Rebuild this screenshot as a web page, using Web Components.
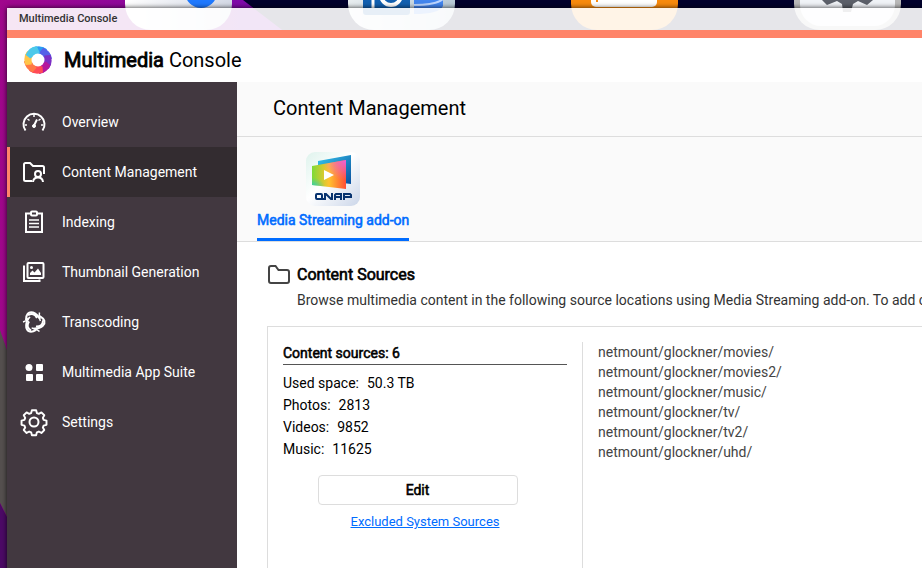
<!DOCTYPE html>
<html lang="en">
<head>
<meta charset="utf-8">
<title>Multimedia Console</title>
<style>
    html, body {
        height: 100%;
        margin: 0;
    }
    body {
        overflow: hidden;
        font-family: Roboto, "Liberation Sans", sans-serif;
        font-size: 14px;
        line-height: 20px;
        color: #000;
    }
    b {
        font-weight: 400;
        -webkit-text-stroke: .04em;
    }
</style>
</head>
<body>
<qc-desktop>
    <qc-window caption="Multimedia Console">
        <qc-brand slot="header"><b>Multimedia</b> Console</qc-brand>
        <qc-sidebar slot="sidebar">
            <qc-nav-item icon="gauge">Overview</qc-nav-item>
            <qc-nav-item icon="content" selected>Content Management</qc-nav-item>
            <qc-nav-item icon="clipboard">Indexing</qc-nav-item>
            <qc-nav-item icon="images">Thumbnail Generation</qc-nav-item>
            <qc-nav-item icon="transcode">Transcoding</qc-nav-item>
            <qc-nav-item icon="apps">Multimedia App Suite</qc-nav-item>
            <qc-nav-item icon="gear">Settings</qc-nav-item>
        </qc-sidebar>
        <qc-page-head heading="Content Management">
            <qc-app-tab>Media Streaming add-on</qc-app-tab>
        </qc-page-head>
        <qc-section heading="Content Sources">
            <span slot="description">Browse multimedia content in the following source locations using Media Streaming add-on. To add content sources, click Edit.</span>
            <qc-sources>
                <qc-stat label="Used space:" slot="stats">50.3 TB</qc-stat>
                <qc-stat label="Photos:" slot="stats">2813</qc-stat>
                <qc-stat label="Videos:" slot="stats">9852</qc-stat>
                <qc-stat label="Music:" slot="stats">11625</qc-stat>
                <qc-path>netmount/glockner/movies/</qc-path>
                <qc-path>netmount/glockner/movies2/</qc-path>
                <qc-path>netmount/glockner/music/</qc-path>
                <qc-path>netmount/glockner/tv/</qc-path>
                <qc-path>netmount/glockner/tv2/</qc-path>
                <qc-path>netmount/glockner/uhd/</qc-path>
            </qc-sources>
        </qc-section>
    </qc-window>
</qc-desktop>

<script>
// One arm of the transcoding knot, drawn three times round the centre
const KNOT_ARM = `
    <path d="M4 10Q4 1 11 2.500Q15 4 18 9" stroke-width="2"/>
    <path d="M6 5Q12 2 15 8" stroke-width="2"/>
    <path d="M1 12Q5 11 8 7" stroke-width="1.500"/>`;

const ICONS = {
    gauge: `
        <path d="M3.500 20.500A10.500 10.500 0 1 1 20.500 20.500" stroke-width="2"/>
        <path d="M12 4v3M5.500 9l2 1.500M18.500 9l-2 1.500M3 15h2M19 15h2" stroke-width="1.500"/>
        <path d="M15 9.500l-3 6" stroke-width="2"/><circle cx="12" cy="16" r="1.500" fill="currentColor"/>`,
    content: `
        <path d="M10 21H3.500Q2 21 2 19.500V4.500Q2 3 3.500 3H8l3 3h9.500Q22 6 22 7.500V14" stroke-width="2"/>
        <circle cx="16" cy="14" r="3" stroke-width="2"/>
        <path d="M11 22q.5-4.500 5-4.500t5 4.500" stroke-width="2"/>`,
    clipboard: `
        <path d="M9 3.500H4V22h16V3.500h-5" stroke-width="2"/>
        <rect x="9" y="1.500" width="6" height="4" rx="1" stroke-width="2"/>
        <path d="M7 10h10M7 13.500h10M7 17h10" stroke-width="1.500"/>`,
    images: `
        <rect x="5.500" y="3" width="16" height="15" rx="1" stroke-width="2"/>
        <path d="M3 6.500H2V21h15.500v-1.500" stroke-width="2"/>
        <circle cx="9.500" cy="7.500" r="1.500" fill="currentColor" stroke="none"/>
        <path d="M8 15v-2l2.500-2.500 2 2L16 8.500l3 4.500v2z" fill="currentColor" stroke="none"/>`,
    transcode: [0, 120, 240].map(angle => `<g transform="rotate(${angle} 12 12)">${KNOT_ARM}</g>`).join(''),
    apps: `
        <g fill="currentColor" stroke="none"><circle cx="7" cy="7.500" r="3.500"/>
        <rect x="14" y="4" width="7" height="7" rx="1"/>
        <rect x="4" y="14" width="7" height="7" rx="1"/>
        <rect x="14" y="14" width="7" height="7" rx="1"/></g>`,
    gear: `
        <circle cx="12" cy="12" r="4.500" stroke-width="2"/>
        <path d="M9.800 -.3h4.400l.8 3 2 .8 2.700-1.500 3 3-1.500 2.700.8 2 3 .8v4.400l-3 .8-.8 2 1.500 2.700-3 3-2.700-1.500-2 .8-.8 3H9.800l-.8-3-2-.8-2.700 1.500-3-3 1.500-2.700-.8-2-3-.8v-4.400l3-.8.8-2-1.500-2.700 3-3 2.700 1.500 2-.8z" transform="translate(.5 .5) scale(.96)" stroke-width="2" stroke-linejoin="round"/>`,
};

class QcElement extends HTMLElement {

    constructor() {
        super();
        this.attachShadow({ mode: 'open' });
    }

    connectedCallback() {
        const template = document.createElement('template');
        template.innerHTML = `<style>* { box-sizing: border-box; }</style>` + this.render();
        this.shadowRoot.replaceChildren(template.content.cloneNode(true));
    }
}

// Wallpaper and shortcuts, with the open window above them
class QcDesktop extends QcElement {
    render() {
        return `
            <style>
                :host {
                    display: flex;
                    position: relative;
                    height: 100vh;
                    padding: 8px 0 0 7px;
                    overflow: hidden;
                    background: #01002c;
                }
                svg {
                    position: absolute;
                    top: 0;
                    left: 0;
                }
                ::slotted(*) {
                    position: relative;
                    flex: 1;
                    min-width: 0;
                }
            </style>
            <svg width="922" height="568" aria-hidden="true">
                <defs>
                    <linearGradient id="sky"><stop offset="0" stop-color="#a0078c"/><stop offset="1" stop-color="#7809ae"/></linearGradient>
                    <linearGradient id="tile"><stop offset="0" stop-color="#fff"/><stop offset="1" stop-color="#d4d9e6"/></linearGradient>
                    <linearGradient id="mail"><stop offset="0" stop-color="#e9eef0"/><stop offset="1" stop-color="#b7c9d6"/></linearGradient>
                </defs>
                <path d="M0 0H243L290 36H60V568H0z" fill="url(#sky)"/>
                <path d="M0 330L14 370V530L0 503z" fill="#55504f"/>
                <path d="M0 503L30 563V568H0z" fill="#4c0a66"/>
                <rect x="125" y="-77" width="107" height="107" rx="26" fill="url(#tile)"/>
                <circle cx="201" cy="-8" r="16" fill="#1f79ff"/>
                <rect x="348" y="-77" width="107" height="107" rx="26" fill="url(#mail)"/>
                <rect x="363" y="-30" width="47" height="45" rx="3" fill="#1260b0"/>
                <path d="M373 0v8" stroke="#fff" stroke-width="3"/>
                <circle cx="391" cy="-5" r="10" fill="none" stroke="#fff" stroke-width="4"/>
                <path d="M414-10h29V6q-4 8-29 8z" fill="#4285ee"/>
                <path d="M414 5q22 0 29-6" fill="none" stroke="#bcd5ff" stroke-width="2"/>
                <rect x="571" y="-77" width="107" height="107" rx="26" fill="#f78a0e"/>
                <rect x="591" y="-30" width="66" height="37" rx="5" fill="#fff"/>
                <path d="M597 0v2" stroke="#f78a0e" stroke-width="2"/>
                <rect x="794" y="-77" width="107" height="107" rx="26" fill="#b9b9b9"/>
                <rect x="800" y="-71" width="95" height="97" rx="21" fill="#f0f3f7"/>
                <path d="M822 0l5 5 10-4 5 3 1 8h8l2-8 5-3 9 4 6-5z" fill="#5c606a"/>
            </svg>
            <slot></slot>
        `;
    }
}
customElements.define('qc-desktop', QcDesktop);

class QcWindow extends QcElement {
    render() {
        return `
            <style>
                :host {
                    display: flex;
                    flex-direction: column;
                    box-shadow: 0 0 5px rgba(0, 0, 0, .8);
                }
                .caption {
                    height: 22px;
                    padding-left: 12px;
                    background: rgba(255, 255, 255, .9);
                    color: #333;
                    font-size: 11px;
                    font-weight: 500;
                    line-height: 21px;
                }
                header {
                    border-top: 8px solid #ff8469;
                    background: #fff;
                }
                .body {
                    display: flex;
                    flex: 1;
                    min-height: 0;
                }
                main {
                    display: flex;
                    flex: 1;
                    flex-direction: column;
                    min-width: 0;
                    overflow: hidden;
                    background: #fff;
                }
            </style>
            <div class="caption">${this.getAttribute('caption')}</div>
            <header><slot name="header"></slot></header>
            <div class="body">
                <slot name="sidebar"></slot>
                <main><slot></slot></main>
            </div>
        `;
    }
}
customElements.define('qc-window', QcWindow);

class QcBrand extends QcElement {
    render() {
        const colors = ['#2a9df4', '#5560e8', '#7c2fc4', '#b5189c', '#ff4b55', '#ff7a45', '#ffc548', '#4cc9ea'];
        const blades = colors.map((color, i) =>
            `<path d="M9 1.500Q17-1.500 23 3L20.500 10 9.500 7.500z" fill="${color}" transform="rotate(${i * 45} 14 14)"/>`).join('');
        return `
            <style>
                :host {
                    display: flex;
                    align-items: center;
                    gap: 12px;
                    height: 44px;
                    padding-left: 17px;
                    font-size: 20px;
                    white-space: pre;
                }
                h1 {
                    margin: 0;
                    font: inherit;
                }
            </style>
            <svg width="28" height="28" viewBox="0 0 28 28" aria-hidden="true">
                <defs><clipPath id="ring"><circle cx="14" cy="14" r="14"/></clipPath></defs>
                <g clip-path="url(#ring)">${blades}</g>
                <circle cx="14" cy="14" r="6.500" fill="#fff"/>
            </svg>
            <h1><slot></slot></h1>
        `;
    }
}
customElements.define('qc-brand', QcBrand);

class QcSidebar extends QcElement {
    render() {
        return `
            <style>
                :host {
                    display: block;
                    flex: none;
                    width: 230px;
                    padding-top: 15px;
                    background: #423840;
                }
            </style>
            <nav><slot></slot></nav>
        `;
    }
}
customElements.define('qc-sidebar', QcSidebar);

class QcNavItem extends QcElement {
    render() {
        return `
            <style>
                :host {
                    display: block;
                }
                a {
                    display: flex;
                    align-items: center;
                    gap: 16px;
                    height: 50px;
                    padding-left: 12px;
                    border-left: 3px solid transparent;
                    color: #fff;
                    text-decoration: none;
                }
                :host([selected]) a {
                    border-color: #ff8469;
                    background: #332c30;
                }
                svg {
                    overflow: visible;
                }
            </style>
            <a href="#"${this.selected ? ' aria-current="page"' : ''}>
                <svg width="24" height="24" viewBox="0 0 24 24" fill="none" stroke="currentColor" aria-hidden="true">${ICONS[this.getAttribute('icon')]}</svg>
                <span><slot></slot></span>
            </a>
        `;
    }

    get selected() {
        return this.hasAttribute('selected');
    }
}
customElements.define('qc-nav-item', QcNavItem);

class QcPageHead extends QcElement {
    render() {
        return `
            <style>
                :host {
                    display: block;
                    border-bottom: 1px solid #ddd;
                    background: #fafafa;
                }
                h2 {
                    margin: 0;
                    padding: 0 36px 2px;
                    border-bottom: 1px solid #ddd;
                    font-size: 20px;
                    font-weight: 400;
                    line-height: 52px;
                }
                div {
                    display: flex;
                    padding: 15px 20px 0;
                }
            </style>
            <h2>${this.getAttribute('heading')}</h2>
            <div role="tablist"><slot></slot></div>
        `;
    }
}
customElements.define('qc-page-head', QcPageHead);

class QcAppTab extends QcElement {
    render() {
        return `
            <style>
                button {
                    display: flex;
                    flex-direction: column;
                    align-items: center;
                    gap: 4px;
                    height: 89px;
                    padding: 0;
                    border: 0;
                    border-bottom: 3px solid #006cff;
                    background: none;
                    color: #006cff;
                    font: 14px/20px Roboto, sans-serif;
                    -webkit-text-stroke: .04em;
                }
            </style>
            <button role="tab" aria-selected="true">
                <svg width="54" height="54" viewBox="0 0 54 54" aria-hidden="true">
                    <defs>
                        <linearGradient id="tile" x2="1" y2="1"><stop offset="0" stop-color="#dff3ed"/><stop offset=".45" stop-color="#fff"/><stop offset="1" stop-color="#cbd6e9"/></linearGradient>
                        <linearGradient id="back" x2="1" y2="1"><stop offset="0" stop-color="#35c7ee"/><stop offset="1" stop-color="#0a4f9e"/></linearGradient>
                        <linearGradient id="front" x2="1"><stop offset="0" stop-color="#7ddb36"/><stop offset=".5" stop-color="#ffc22e"/><stop offset="1" stop-color="#ff4d35"/></linearGradient>
                        <radialGradient id="pink" cx="1" cy="0" r=".7"><stop offset="0" stop-color="#ee62dc"/><stop offset="1" stop-color="#ee62dc" stop-opacity="0"/></radialGradient>
                        <radialGradient id="cyan" cx="0" cy="1" r=".4"><stop offset="0" stop-color="#20c9d6"/><stop offset="1" stop-color="#20c9d6" stop-opacity="0"/></radialGradient>
                    </defs>
                    <rect width="54" height="54" rx="9" fill="url(#tile)"/>
                    <path d="M12 9L45 3V32L12 28z" fill="url(#back)"/>
                    <path d="M6 14L40 8V37L6 33z" fill="url(#front)"/>
                    <path d="M6 14L40 8V37L6 33z" fill="url(#pink)"/>
                    <path d="M6 14L40 8V37L6 33z" fill="url(#cyan)"/>
                    <path d="M18 18L28 23 18 28z" fill="#fff"/>
                    <g fill="none" stroke="#07336f" stroke-width="2">
                        <rect x="10" y="42" width="6" height="5" rx="1"/>
                        <path d="M14 47h4M19 48v-6h1l5 5h1v-6M29 48v-5l1-1h5v6M29 45h6M38 48v-6h6l1 1v2h-7"/>
                    </g>
                </svg>
                <span><slot></slot></span>
            </button>
        `;
    }
}
customElements.define('qc-app-tab', QcAppTab);

class QcSection extends QcElement {
    render() {
        return `
            <style>
                :host {
                    display: flex;
                    flex: 1;
                    flex-direction: column;
                    padding: 22px 0 0 30px;
                }
                .heading {
                    display: flex;
                    align-items: center;
                    gap: 6px;
                }
                h3 {
                    margin: 0;
                    font-size: 16px;
                    font-weight: 400;
                    line-height: 22px;
                    -webkit-text-stroke: .04em;
                }
                p {
                    margin: 4px 0 16px 30px;
                    color: #333;
                    white-space: nowrap;
                }
            </style>
            <div class="heading">
                <svg width="24" height="22" viewBox="0 0 24 22" fill="none" stroke="#444" stroke-width="2" aria-hidden="true">
                    <path d="M2 4q0-2 2-2h4.500l3 4H20q2 0 2 2v9q0 2-2 2H4q-2 0-2-2z"/>
                </svg>
                <h3>${this.getAttribute('heading')}</h3>
            </div>
            <p><slot name="description"></slot></p>
            <slot></slot>
        `;
    }
}
customElements.define('qc-section', QcSection);

class QcSources extends QcElement {
    render() {
        const total = this.querySelectorAll('qc-path').length;
        return `
            <style>
                :host {
                    display: flex;
                    flex: 1;
                    padding-top: 15px;
                    border: solid #ddd;
                    border-width: 1px 0 0 1px;
                }
                .summary {
                    display: flex;
                    flex-direction: column;
                    width: 315px;
                    padding: 0 15px;
                    border-right: 1px solid #ddd;
                }
                h4 {
                    margin: 0 0 7px;
                    border-bottom: 1px solid #555;
                    font-size: 14px;
                    font-weight: 400;
                    line-height: 22px;
                    -webkit-text-stroke: .04em;
                }
                button {
                    align-self: center;
                    width: 200px;
                    height: 30px;
                    margin: 15px 15px 7px 0;
                    border: 1px solid #ddd;
                    border-radius: 4px;
                    background: #fff;
                    color: #000;
                    font: 14px/20px Roboto, sans-serif;
                    -webkit-text-stroke: .04em;
                }
                a {
                    align-self: center;
                    color: #006cff;
                    font-size: 13px;
                }
                .paths {
                    padding: 0 15px;
                }
            </style>
            <div class="summary">
                <h4>Content sources: ${total}</h4>
                <slot name="stats"></slot>
                <button type="button">Edit</button>
                <a href="#">Excluded System Sources</a>
            </div>
            <div class="paths"><slot></slot></div>
        `;
    }
}
customElements.define('qc-sources', QcSources);

class QcStat extends QcElement {
    render() {
        return `
            <style>
                :host {
                    display: flex;
                    gap: 8px;
                    line-height: 22px;
                }
            </style>
            <span>${this.getAttribute('label')}</span>
            <span><slot></slot></span>
        `;
    }
}
customElements.define('qc-stat', QcStat);

class QcPath extends QcElement {
    render() {
        return `
            <style>
                :host {
                    display: block;
                    color: #444;
                }
            </style>
            <slot></slot>
        `;
    }
}
customElements.define('qc-path', QcPath);
</script>
</body>
</html>
